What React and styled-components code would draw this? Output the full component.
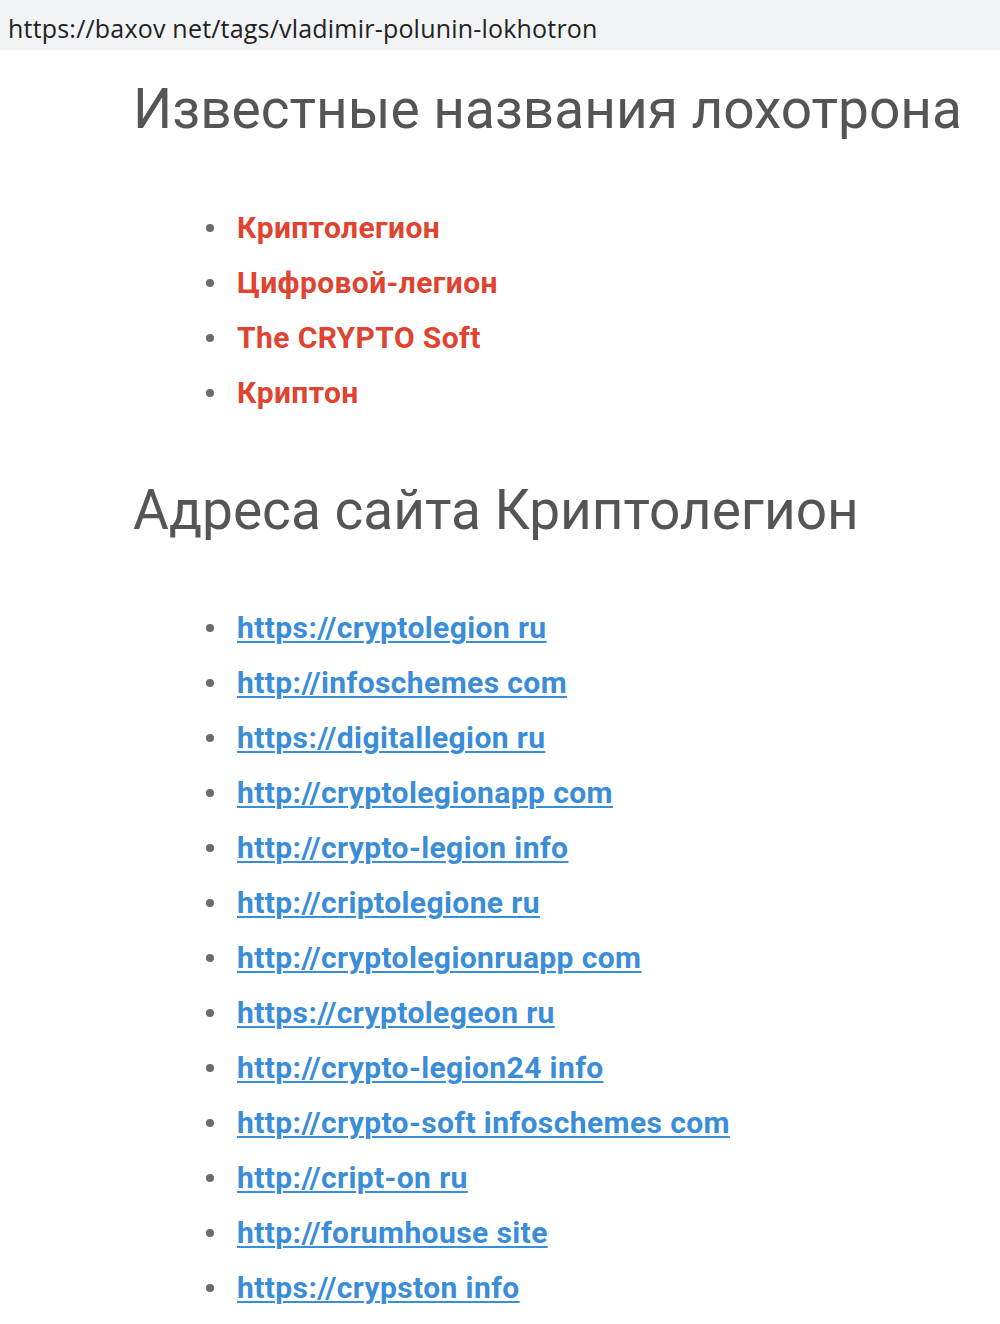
import React from 'react';
import styled, { createGlobalStyle } from 'styled-components';

const Global = createGlobalStyle`
    body {
        margin: 0;
        background: #fff;
        font-family: Roboto, "Noto Sans", sans-serif;
    }
`

const AddressBar = styled.div`
    height: 50px;
    background: #f1f3f4;
    display: flex;
    align-items: center;
    padding: 5px 8px 0;
    box-sizing: border-box;
    font-family: "Open Sans", "Liberation Sans", sans-serif;
    font-size: 25px;
    letter-spacing: 0.2px;
    color: #222;
`

const Content = styled.main`
    padding: 26px 0 0 133px;
`

const Heading = styled.h2`
    margin: 0;
    font-size: 55px;
    font-weight: 400;
    line-height: 66px;
    color: #555;
`

const List = styled.ul`
    list-style: none;
    margin: 0;
    padding: ${p => p.$top}px 0 ${p => p.$bottom}px 73px;
`

const Item = styled.li`
    display: flex;
    align-items: center;
    height: 55px;
    font-size: 30px;
    font-weight: 700;
    letter-spacing: 0.4px;
    &::before {
        content: '';
        width: 8px;
        height: 8px;
        border-radius: 50%;
        background: #6b6b6b;
        margin-right: 23px;
        flex: none;
    }
`

const Name = styled.span`
    color: #e0432f;
`

const Link = styled.a`
    color: #3a8dd8;
    text-decoration: underline;
    text-decoration-thickness: 2px;
    text-underline-offset: 3px;
`

const names = ['Криптолегион', 'Цифровой-легион', 'The CRYPTO Soft', 'Криптон'];

const links = [
    'https://cryptolegion ru',
    'http://infoschemes com',
    'https://digitallegion ru',
    'http://cryptolegionapp com',
    'http://crypto-legion info',
    'http://criptolegione ru',
    'http://cryptolegionruapp com',
    'https://cryptolegeon ru',
    'http://crypto-legion24 info',
    'http://crypto-soft infoschemes com',
    'http://cript-on ru',
    'http://forumhouse site',
    'https://crypston info',
];

export default function App() {
    return (
        <>
            <Global />
            <AddressBar>https://baxov net/tags/vladimir-polunin-lokhotron</AddressBar>
            <Content>
                <Heading>Известные названия лохотрона</Heading>
                <List $top={58} $bottom={57}>
                    {names.map(n => (
                        <Item key={n}><Name>{n}</Name></Item>
                    ))}
                </List>
                <Heading>Адреса сайта Криптолегион</Heading>
                <List $top={57} $bottom={0}>
                    {links.map(l => (
                        <Item key={l}><Link href="#">{l}</Link></Item>
                    ))}
                </List>
            </Content>
        </>
    );
}
